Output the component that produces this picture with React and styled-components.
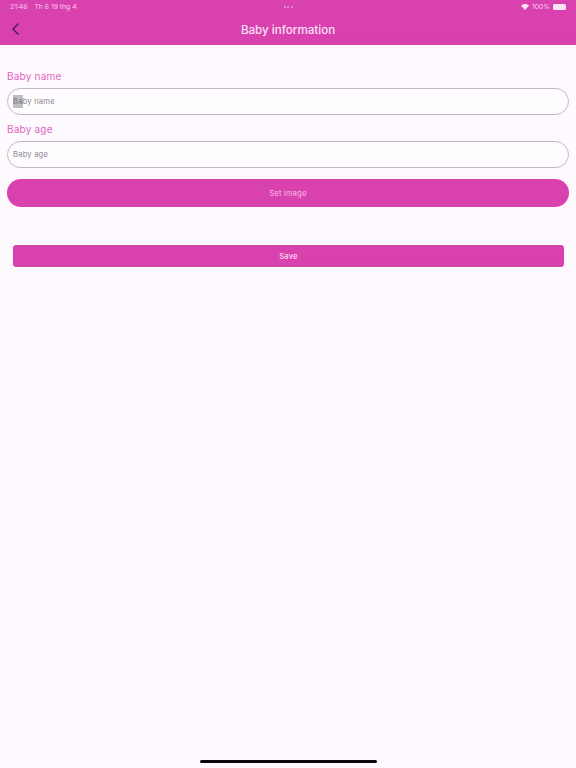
import React from "react";
import styled, { createGlobalStyle } from "styled-components";

const Global = createGlobalStyle`
  html, body { margin: 0; padding: 0; background: #fef9fe; }
  * { box-sizing: border-box; }
  body { font-family: Inter, "Liberation Sans", sans-serif; }
`;

const Page = styled.div`
  position: relative;
  width: 576px;
  height: 768px;
  overflow: hidden;
  background: #fef9fe;
`;

const Header = styled.header`
  height: 45px;
  background: #d941ae;
  display: flex;
  flex-direction: column;
  color: #fbe3f5;
`;

const StatusBar = styled.div`
  height: 13px;
  padding: 0 10px 0 10px;
  display: flex;
  align-items: center;
  justify-content: space-between;
  font-size: 6.8px;
  color: #f9cdec;
`;

const StatusSide = styled.div`
  flex: 1;
  display: flex;
  align-items: center;
  justify-content: ${(p) => (p.$end ? "flex-end" : "flex-start")};
  gap: ${(p) => (p.$end ? "3px" : "7px")};
`;

const Dots = styled.div`
  display: flex;
  gap: 1.5px;
`;

const Dot = styled.span`
  width: 2px;
  height: 2px;
  border-radius: 50%;
  background: #eb94d4;
`;

const Battery = styled.span`
  width: 13px;
  height: 6px;
  border-radius: 1.5px;
  background: #fbe3f5;
`;

const NavBar = styled.div`
  height: 32px;
  padding: 2px 0 0;
  display: grid;
  grid-template-columns: 1fr auto 1fr;
  align-items: center;
`;

const BackButton = styled.button`
  width: 12px;
  height: 16px;
  margin-left: 11px;
  padding: 0;
  border: 0;
  background: none;
  color: #4a1560;
  display: flex;
`;

const Title = styled.h1`
  margin: 0;
  font-size: 11.6px;
  font-weight: 500;
  color: #fbe3f5;
`;

const HeaderRule = styled.span`
  height: 1px;
  margin-top: 6px;
  background: #cf3fa5;
`;

const Form = styled.main`
  padding: 24px 7px 0;
  display: flex;
  flex-direction: column;
`;

const Label = styled.label`
  height: 14px;
  margin-bottom: 5px;
  font-size: 10px;
  line-height: 14px;
  letter-spacing: 0.2px;
  color: #dd66bf;
`;

const Field = styled.div`
  height: 27px;
  margin-bottom: ${(p) => p.$gap}px;
  padding: 0 5px 1px;
  display: flex;
  align-items: center;
  border: 1px solid #bdb9bf;
  border-radius: 14px;
  background: #fffcff;
  font-size: 7.6px;
  letter-spacing: 0.2px;
  color: #8b878c;
`;

const Selection = styled.span`
  background: #c1bec1;
  color: #77737a;
  padding: 2px 0;
`;

const PillButton = styled.button`
  width: 562px;
  height: 28px;
  border: 0;
  border-radius: 14px;
  background: #d941ae;
  color: #f7c5e9;
  font: 400 7.5px Inter, "Liberation Sans", sans-serif;
  letter-spacing: 0.25px;
`;

const SaveButton = styled.button`
  position: relative;
  width: 551px;
  height: 22px;
  margin: 38px 0 0 6px;
  border: 0;
  border-radius: 4px;
  background: #d941ae;
  color: #fbdcf3;
  font: 500 7.5px Inter, "Liberation Sans", sans-serif;
  letter-spacing: 0.2px;
  box-shadow: inset 0 1px 0 #c9489f, inset 0 -1px 0 #c9489f;

  &::after {
    content: "";
    position: absolute;
    left: 287px;
    right: 0;
    top: 12px;
    height: 1px;
    background: #cf3fa5;
  }
`;

const HomeIndicator = styled.div`
  position: absolute;
  left: 200px;
  top: 760px;
  width: 177px;
  height: 3px;
  border-radius: 2px;
  background: #0b080c;
`;

export default function App() {
  return (
    <Page>
      <Global />
      <Header>
        <StatusBar>
          <StatusSide>
            <span>21:46</span>
            <span>Th 6 19 thg 4</span>
          </StatusSide>
          <Dots>
            <Dot />
            <Dot />
            <Dot />
          </Dots>
          <StatusSide $end>
            <svg width="8" height="6" viewBox="0 0 16 12" fill="#fbe3f5">
              <path d="M8 12 0 3.500C4.500-1 11.500-1 16 3.500Z" />
            </svg>
            <span>100%</span>
            <Battery />
          </StatusSide>
        </StatusBar>
        <NavBar>
          <BackButton aria-label="Back">
            <svg width="10" height="14" viewBox="0 0 10 14" fill="none" stroke="currentColor" strokeWidth="1.4">
              <path d="M7.500 1.500 2 7l5.500 5.500" />
            </svg>
          </BackButton>
          <Title>Baby information</Title>
          <HeaderRule />
        </NavBar>
      </Header>
      <Form>
        <Label>Baby name</Label>
        <Field $gap={7}>
          <span>
            <Selection>Ba</Selection>by name
          </span>
        </Field>
        <Label>Baby age</Label>
        <Field $gap={11}>Baby age</Field>
        <PillButton>Set image</PillButton>
        <SaveButton>Save</SaveButton>
      </Form>
      <HomeIndicator />
    </Page>
  );
}
